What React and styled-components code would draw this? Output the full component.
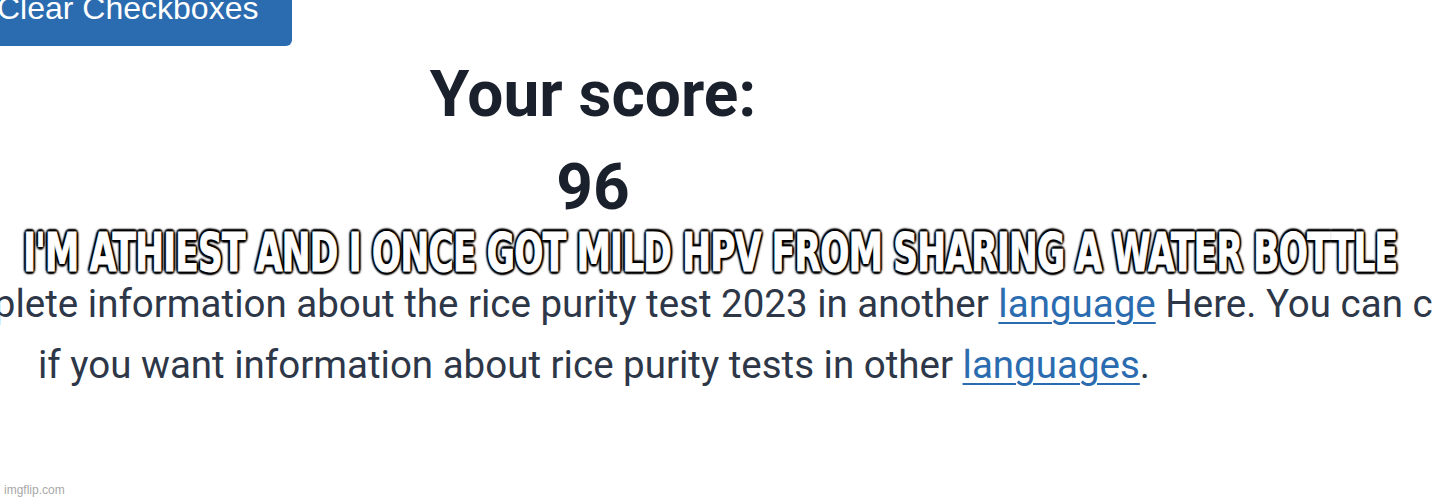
import React from 'react';
import styled, { createGlobalStyle } from 'styled-components';

const GlobalStyle = createGlobalStyle`
  html, body {
    margin: 0;
    padding: 0;
    background: #ffffff;
  }
  body {
    width: 1433px;
    height: 500px;
    overflow: hidden;
    font-family: Roboto, "Liberation Sans", sans-serif;
  }
`;

const Page = styled.div`
  position: relative;
  width: 1433px;
  height: 500px;
  overflow: hidden;
`;

const ClearButton = styled.button`
  display: block;
  margin: -24px 0 0 -20px;
  padding: 0 34px 0 17px;
  height: 70px;
  border: none;
  border-radius: 0 0 6px 6px;
  background: #2b6cb0;
  color: #ffffff;
  font-family: "Liberation Sans", Arial, sans-serif;
  font-size: 32px;
  line-height: 1;
  cursor: pointer;
  span {
    display: block;
    margin-top: -6px;
  }
`;

const ScoreColumn = styled.section`
  width: 1186px;
  display: flex;
  flex-direction: column;
  align-items: center;
  color: #1a202c;
`;

const Heading = styled.h2`
  margin: ${p => p.$gap}px 0 0;
  font-family: Roboto, sans-serif;
  font-weight: 700;
  font-size: 64px;
  line-height: 1;
`;

const Text = styled.div`
  margin-top: 53px;
  color: #2d3748;
  font-family: Roboto, sans-serif;
  font-size: 38.5px;
  line-height: 61px;
`;

const Line = styled.div`
  white-space: nowrap;
  text-indent: ${p => p.$indent}px;
  a {
    color: #2b6cb0;
    text-decoration: underline;
    text-underline-offset: 5px;
    text-decoration-thickness: 2px;
  }
`;

/* meme caption laid over the page */
const Caption = styled.div`
  position: absolute;
  left: 0;
  right: 13px;
  top: 226px;
  display: flex;
  justify-content: center;
  font-family: "DejaVu Sans Condensed", "DejaVu Sans", sans-serif;
  font-weight: 700;
  font-size: 54px;
  line-height: 1;
  color: #ffffff;
  letter-spacing: -1px;
  -webkit-text-stroke: 1px #ffffff;
  text-shadow:
    2px 2px 2px #000, -2px -2px 2px #000, 2px -2px 2px #000, -2px 2px 2px #000,
    0 3px 2px #000, 0 -3px 2px #000, 3px 0 2px #000, -3px 0 2px #000;
  span {
    display: inline-block;
    transform: scaleX(0.706);
    white-space: nowrap;
  }
`;

const Watermark = styled.div`
  position: absolute;
  left: 4px;
  bottom: 3px;
  font-family: "Liberation Sans", Arial, sans-serif;
  font-size: 12px;
  color: #a8a8a8;
`;

export default function App() {
  return (
    <Page>
      <GlobalStyle />
      <ClearButton>
        <span>Clear Checkboxes</span>
      </ClearButton>
      <ScoreColumn>
        <Heading $gap={17}>Your score:</Heading>
        <Heading $gap={29}>96</Heading>
      </ScoreColumn>
      <Text>
        <Line $indent={-82}>
          complete information about the rice purity test 2023 in another <a href="#">language</a> Here. You can check
        </Line>
        <Line $indent={38}>
          if you want information about rice purity tests in other <a href="#">languages</a>.
        </Line>
      </Text>
      <Caption>
        <span>I'M ATHIEST AND I ONCE GOT MILD HPV FROM SHARING A WATER BOTTLE</span>
      </Caption>
      <Watermark>imgflip.com</Watermark>
    </Page>
  );
}
